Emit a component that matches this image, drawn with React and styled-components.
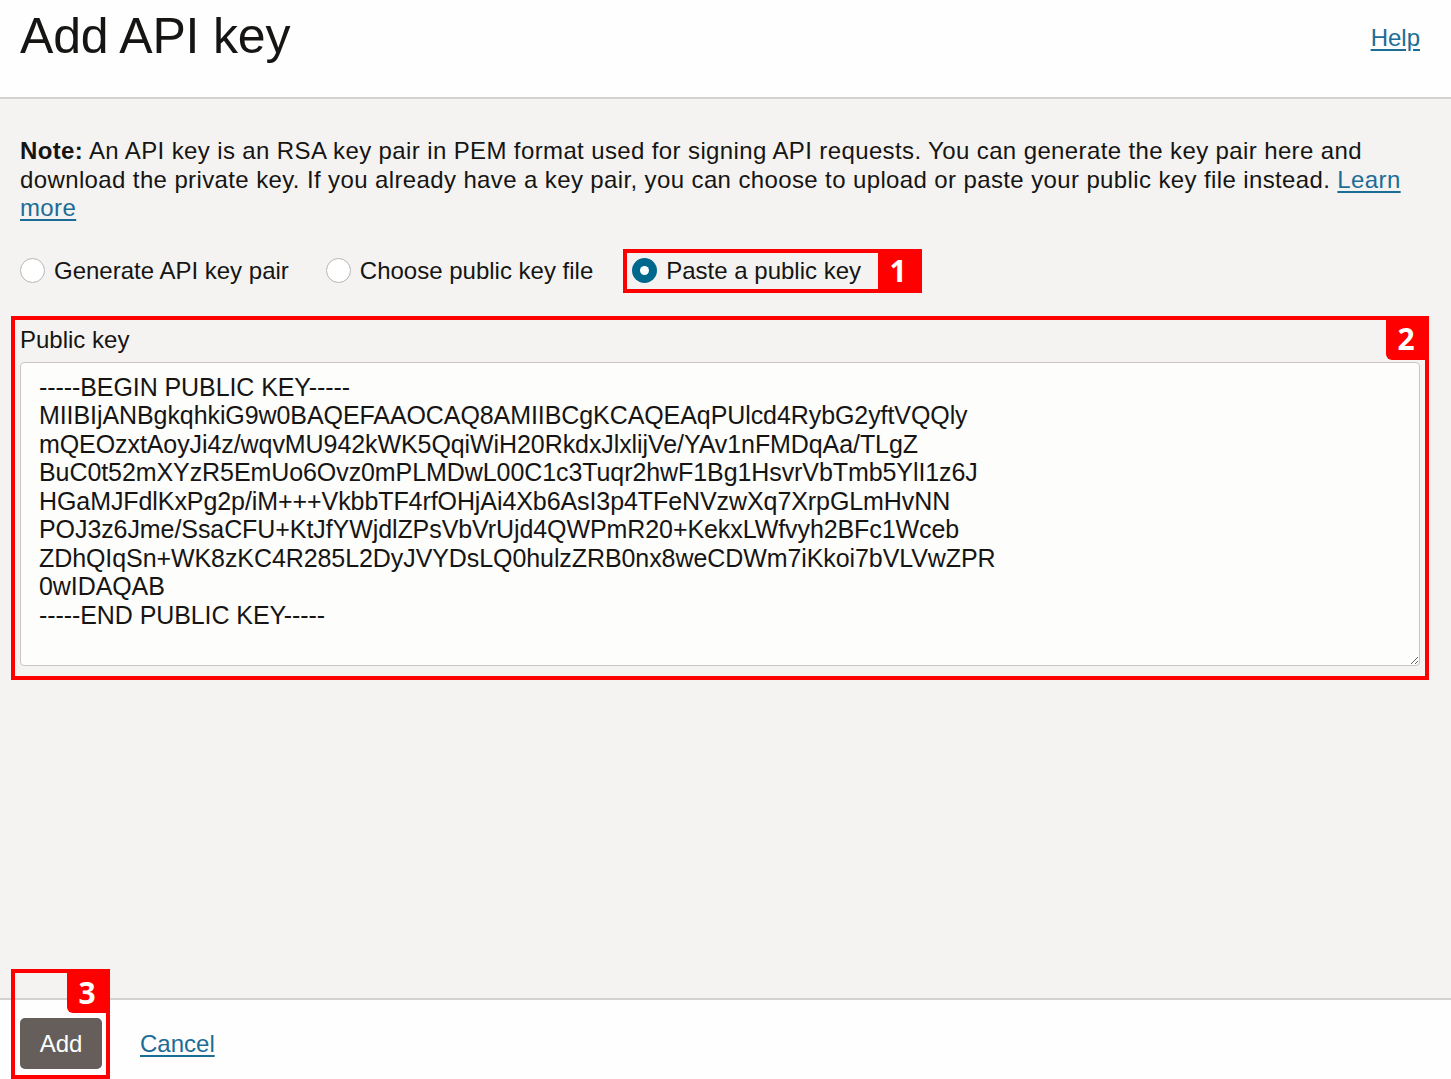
import React from "react";
import styled, { createGlobalStyle } from "styled-components";

const Global = createGlobalStyle`
  html, body { margin: 0; padding: 0; }
  body {
    font-family: "Liberation Sans", Arial, sans-serif;
    color: #161513;
    background: #f4f3f2;
  }
  * { box-sizing: border-box; }
`;

const Page = styled.div`
  display: flex;
  flex-direction: column;
  min-height: 1079px;
  background: #f4f3f2;
`;

const Header = styled.header`
  display: flex;
  justify-content: space-between;
  align-items: flex-start;
  height: 99px;
  padding: 6px 31px 0 20px;
  background: #fefefe;
  border-bottom: 2px solid #d4d1ce;
`;

const Title = styled.h1`
  margin: 0;
  font-weight: 400;
  font-size: 50px;
  line-height: 60px;
  letter-spacing: -0.2px;
`;

const Link = styled.a`
  color: #1c6d96;
  text-decoration: underline;
  text-underline-offset: 3px;
  cursor: pointer;
`;

const HelpLink = styled(Link)`
  font-size: 24px;
  line-height: 28px;
  margin-top: 18px;
`;

const Main = styled.main`
  flex: 1;
  display: flex;
  flex-direction: column;
  padding: 38px 22px 0 11px;
`;

const Note = styled.p`
  margin: 0 0 0 9px;
  font-size: 24px;
  line-height: 28.5px;
  letter-spacing: 0.38px;
`;

const RadioRow = styled.div`
  display: flex;
  align-items: center;
  margin: 26px 0 0 9px;
  height: 44px;
`;

const RadioOption = styled.label`
  display: flex;
  align-items: center;
  gap: 9px;
  font-size: 24px;
  margin-right: ${(p) => p.$mr || 0}px;
`;

const RadioCircle = styled.span`
  width: 25px;
  height: 25px;
  border-radius: 50%;
  flex: none;
  background: ${(p) => (p.$checked ? "#00688c" : "#ffffff")};
  border: ${(p) => (p.$checked ? "none" : "1px solid #b9b6b3")};
  display: flex;
  align-items: center;
  justify-content: center;
  &::after {
    content: "";
    display: ${(p) => (p.$checked ? "block" : "none")};
    width: 9px;
    height: 9px;
    border-radius: 50%;
    background: #ffffff;
  }
`;

const Highlight = styled.div`
  display: flex;
  align-items: stretch;
  height: 44px;
  border: 4px solid #ff0000;
  padding-left: 5px;
  margin-left: 0;
`;

const HighlightInner = styled.div`
  display: flex;
  align-items: center;
  padding-right: 17px;
`;

const Badge = styled.span`
  display: flex;
  align-items: center;
  justify-content: center;
  width: 40px;
  background: #ff0000;
  color: #ffffff;
  font-family: "Open Sans", "DejaVu Sans", sans-serif;
  font-weight: 700;
  font-size: 30px;
  line-height: 1;
  border-bottom-left-radius: ${(p) => (p.$rounded ? "6px" : "0")};
`;

const FieldBox = styled.div`
  position: relative;
  margin-top: 23px;
  border: 4px solid #ff0000;
  padding: 5px 5px 10px 5px;
`;

const CornerBadge = styled(Badge)`
  position: absolute;
  top: -1px;
  right: -1px;
  height: 41px;
`;

const FieldLabel = styled.div`
  font-size: 24px;
  line-height: 30px;
  margin-bottom: 7px;
`;

const KeyArea = styled.textarea`
  display: block;
  width: 100%;
  height: 304px;
  resize: vertical;
  border: 1px solid #c9c6c3;
  border-radius: 4px;
  background: #fdfdfc;
  padding: 10px 18px 8px;
  font-family: "Liberation Sans", Arial, sans-serif;
  font-size: 25px;
  line-height: 28.5px;
  letter-spacing: -0.08px;
  color: #161513;
  outline: none;
`;

const Footer = styled.footer`
  position: relative;
  display: flex;
  align-items: center;
  gap: 38px;
  height: 81px;
  padding: 0 20px;
  background: #fefefe;
  border-top: 2px solid #d4d1ce;
`;

const AddButton = styled.button`
  width: 82px;
  height: 51px;
  border: none;
  border-radius: 5px;
  background: #655e5a;
  color: #ffffff;
  font-family: "Liberation Sans", Arial, sans-serif;
  font-size: 24px;
  margin-top: 8px;
  cursor: pointer;
`;

const CancelLink = styled(Link)`
  font-size: 24px;
  margin-top: 8px;
`;

const ButtonHighlight = styled.div`
  position: absolute;
  left: 11px;
  top: -31px;
  width: 99px;
  height: 110px;
  border: 4px solid #ff0000;
  pointer-events: none;
`;

const ButtonBadge = styled(Badge)`
  position: absolute;
  top: -1px;
  right: -1px;
  height: 41px;
  width: 40px;
`;

const keyText = `-----BEGIN PUBLIC KEY-----
MIIBIjANBgkqhkiG9w0BAQEFAAOCAQ8AMIIBCgKCAQEAqPUlcd4RybG2yftVQQly
mQEOzxtAoyJi4z/wqvMU942kWK5QqiWiH20RkdxJlxlijVe/YAv1nFMDqAa/TLgZ
BuC0t52mXYzR5EmUo6Ovz0mPLMDwL00C1c3Tuqr2hwF1Bg1HsvrVbTmb5YlI1z6J
HGaMJFdlKxPg2p/iM+++VkbbTF4rfOHjAi4Xb6AsI3p4TFeNVzwXq7XrpGLmHvNN
POJ3z6Jme/SsaCFU+KtJfYWjdlZPsVbVrUjd4QWPmR20+KekxLWfvyh2BFc1Wceb
ZDhQIqSn+WK8zKC4R285L2DyJVYDsLQ0hulzZRB0nx8weCDWm7iKkoi7bVLVwZPR
0wIDAQAB
-----END PUBLIC KEY-----`;

export default function App() {
  return (
    <Page>
      <Global />
      <Header>
        <Title>Add API key</Title>
        <HelpLink>Help</HelpLink>
      </Header>
      <Main>
        <Note>
          <b>Note:</b> An API key is an RSA key pair in PEM format used for signing API requests. You can generate the key pair here and download the private key. If you already have a key pair, you can choose to upload or paste your public key file instead. <Link>Learn more</Link>
        </Note>
        <RadioRow>
          <RadioOption $mr={37}>
            <RadioCircle />
            Generate API key pair
          </RadioOption>
          <RadioOption $mr={30}>
            <RadioCircle />
            Choose public key file
          </RadioOption>
          <Highlight>
            <HighlightInner>
              <RadioOption>
                <RadioCircle $checked />
                Paste a public key
              </RadioOption>
            </HighlightInner>
            <Badge>1</Badge>
          </Highlight>
        </RadioRow>
        <FieldBox>
          <CornerBadge $rounded>2</CornerBadge>
          <FieldLabel>Public key</FieldLabel>
          <KeyArea defaultValue={keyText} spellCheck={false} />
        </FieldBox>
      </Main>
      <Footer>
        <ButtonHighlight>
          <ButtonBadge $rounded>3</ButtonBadge>
        </ButtonHighlight>
        <AddButton>Add</AddButton>
        <CancelLink>Cancel</CancelLink>
      </Footer>
    </Page>
  );
}
